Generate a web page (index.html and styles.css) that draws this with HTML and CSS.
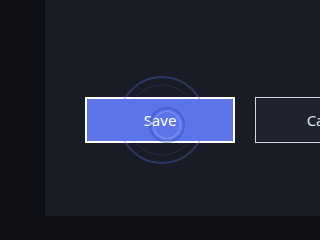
FILE: index.html
```html
<!DOCTYPE html>
<html lang="en">
<head>
    <meta charset="UTF-8">
    <title>Dialog actions</title>
    <link rel="stylesheet" href="styles.css">
</head>
<body>
    <div class="panel">
        <div class="actions">
            <button class="btn btn-primary">
                <span>Save</span>
                <!-- focus ripple -->
                <svg class="ripple" width="120" height="120" viewBox="0 0 120 120">
                    <circle cx="60" cy="60" r="43" fill="none" stroke="rgba(90,115,235,0.32)" stroke-width="2"/>
                    <circle cx="60" cy="60" r="35" fill="none" stroke="rgba(90,115,235,0.18)" stroke-width="1"/>
                    <circle cx="65" cy="65" r="17" fill="none" stroke="rgba(40,60,170,0.35)" stroke-width="2"/>
                    <circle cx="65" cy="65" r="13.5" fill="none" stroke="rgba(190,205,255,0.35)" stroke-width="1.2"/>
                </svg>
            </button>
            <button class="btn btn-secondary"><span>Cancel</span></button>
        </div>
    </div>
</body>
</html>
```

FILE: styles.css
```css
body {
    margin: 0;
    padding: 0;
    background-color: #0f1015;
    font-family: "Noto Sans", "Open Sans", sans-serif;
    width: 320px;
    height: 240px;
    overflow: hidden;
}

.panel {
    margin-left: 45px;
    height: 216px;
    background-color: #1a1c25;
    overflow: hidden;
}

.actions {
    display: flex;
    gap: 20px;
    padding-top: 97px;
    padding-left: 40px;
}

.btn {
    flex: none;
    width: 150px;
    height: 46px;
    font-family: inherit;
    font-size: 15px;
    display: flex;
    align-items: center;
    justify-content: center;
    position: relative;
    cursor: pointer;
    padding: 0;
}

.btn-primary {
    background-color: #5b74e8;
    border: 2px solid #ffffff;
    color: #ffffff;
}

.btn-secondary {
    background-color: #20232e;
    border: 1px solid #d2d6e2;
    color: #dfe3ee;
}

.ripple {
    position: absolute;
    left: 15px;
    top: -39px;
    overflow: visible;
    pointer-events: none;
}
```
